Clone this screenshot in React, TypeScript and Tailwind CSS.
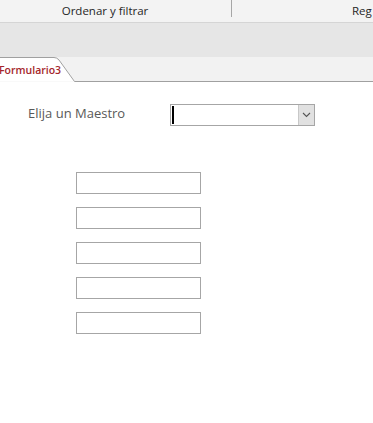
import React from 'react';

const font = "font-['Segoe_UI','Open_Sans','Noto_Sans',sans-serif]";

const TextBox: React.FC = () => (
  <div className="w-[125px] h-[22px] border border-[#a6a6a6] bg-white" />
);

const App: React.FC = () => {
  return (
    <div className={`w-[373px] h-[423px] overflow-hidden bg-white ${font}`}>
      {/* Ribbon group labels */}
      <div className="h-[23px] bg-[#f3f3f3] border-b border-[#d5d5d5] flex items-start whitespace-nowrap overflow-hidden">
        <div className="w-[231px] shrink-0 pr-[21px] h-[22px] flex items-center justify-center text-[11.5px] text-[#262626]">
          Ordenar y filtrar
        </div>
        <div className="w-px h-[17px] shrink-0 bg-[#a6a6a6]" />
        <div className="pl-[120px] shrink-0 h-[22px] flex items-center text-[11.5px] text-[#262626]">
          Reg
        </div>
      </div>

      {/* Gray band */}
      <div className="h-[34px] bg-[#e6e6e6]" />

      {/* Document tabs */}
      <div className="h-[25px] bg-[#f2f2f2] flex items-end">
        <div className="relative w-[76px] h-[25px] shrink-0">
          <svg className="absolute inset-0" width="76" height="25" viewBox="0 0 76 25">
            <path d="M0 0.5 H54 Q57 0.5 59 3 L75 24.5 H0 Z" fill="#ffffff" />
            <path d="M0 0.5 H54 Q57 0.5 59 3 L74.5 24.5 H76" fill="none" stroke="#a0a0a0" strokeWidth="1" />
          </svg>
          <span className="absolute left-[-1px] top-[6px] text-[10.5px] font-semibold text-[#a4262c] leading-[14px]">
            Formulario3
          </span>
        </div>
        <div className="flex-1 h-[25px] border-b border-[#a0a0a0]" />
      </div>

      {/* Form body */}
      <div className="pt-[22px]">
        <div className="flex items-center h-[22px]">
          <div className="w-[170px] pl-[28px] pb-[3px] text-[13px] text-[#595959]">Elija un Maestro</div>
          <div className="w-[145px] h-[22px] border border-[#a6a6a6] flex bg-white">
            <div className="flex-1 flex items-center pl-[1px]">
              <div className="w-[2px] h-[18px] bg-black" />
            </div>
            <div className="w-[16px] h-full bg-[#e1e1e1] border-l border-[#c8c8c8] flex items-center justify-center">
              <svg width="9" height="6" viewBox="0 0 9 6">
                <path d="M1 1 L4.5 4.5 L8 1" fill="none" stroke="#555555" strokeWidth="1.1" />
              </svg>
            </div>
          </div>
        </div>

        <div className="pl-[76px] pt-[46px] flex flex-col gap-[13px]">
          <TextBox />
          <TextBox />
          <TextBox />
          <TextBox />
          <TextBox />
        </div>
      </div>
    </div>
  );
};

export default App;
